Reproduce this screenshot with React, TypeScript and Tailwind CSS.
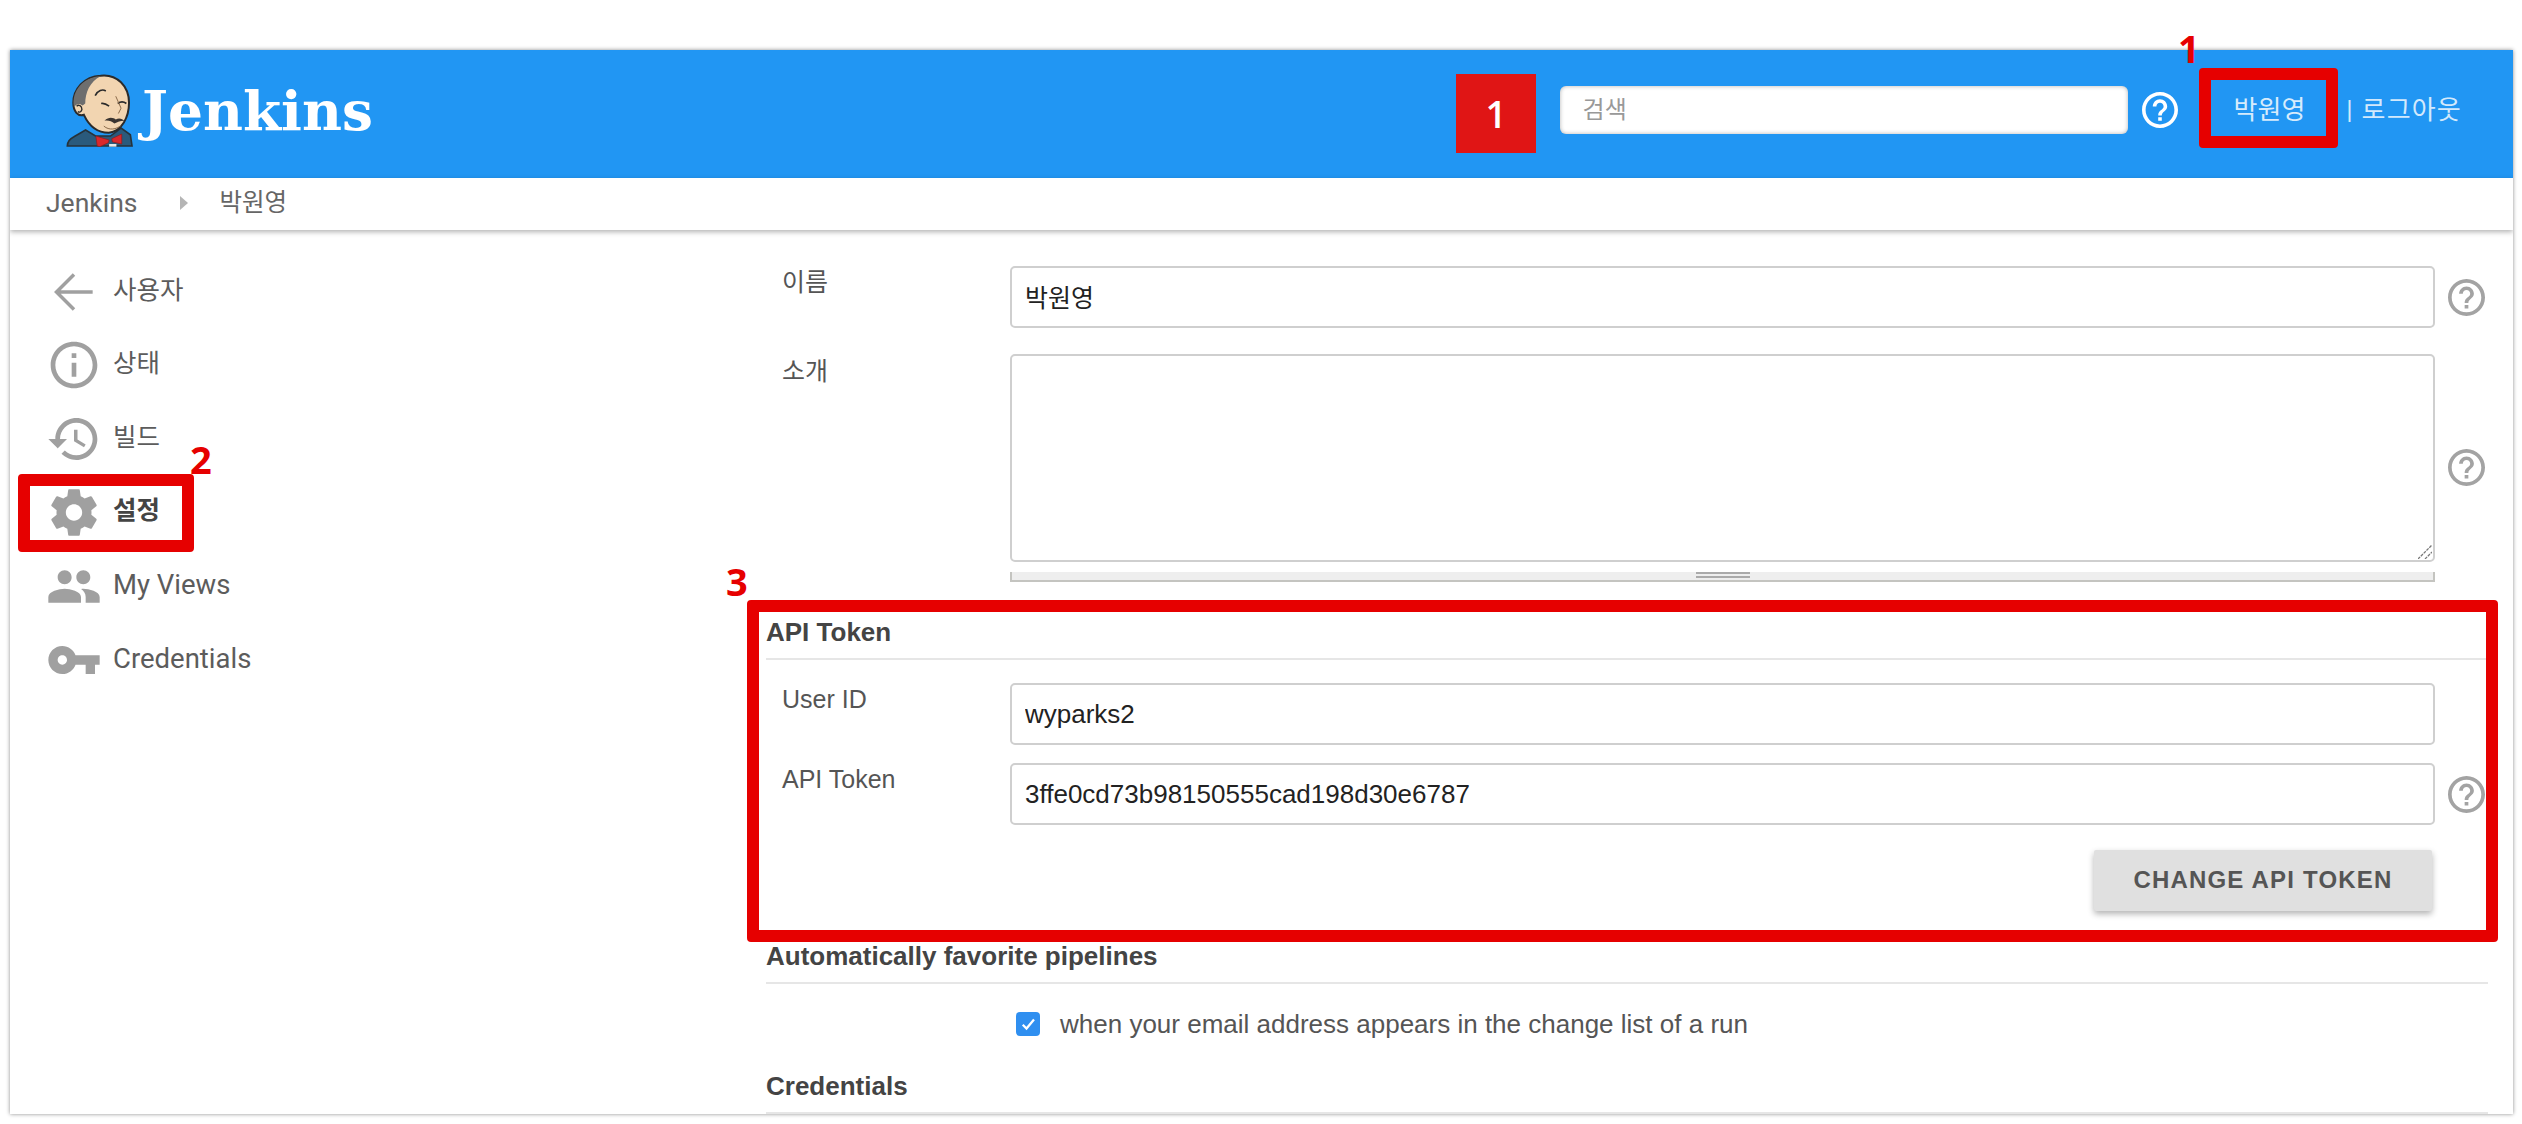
import React from 'react';

const HELP = 'M11 18h2v-2h-2v2zm1-16C6.48 2 2 6.48 2 12s4.48 10 10 10 10-4.48 10-10S17.52 2 12 2zm0 18c-4.41 0-8-3.59-8-8s3.59-8 8-8 8 3.59 8 8-3.59 8-8 8zm0-14c-2.21 0-4 1.79-4 4h2c0-1.1.9-2 2-2s2 .9 2 2c0 2-3 1.75-3 5h2c0-2.25 3-2.5 3-5 0-2.21-1.79-4-4-4z';

const HelpIcon = ({ className }: { className: string }) => (
  <svg viewBox="2 2 20 20" className={className} fill="currentColor">
    <path d={HELP} />
  </svg>
);

// Jenkins butler, drawn in a 3x grid
const Butler = () => (
  <svg viewBox="46 63 202 220" className="w-[67px] h-[73px] shrink-0">
    <path d="M50 280 Q50 262 70 252 L105 232 L135 250 L180 250 L212 226 L240 246 L245 280 Z" fill="#2a5a7c" stroke="#26323a" strokeWidth="5" />
    <path d="M150 68 C200 62 236 100 236 150 C236 192 215 236 175 240 C135 240 112 212 100 186 C82 192 68 176 68 150 C68 110 100 70 150 68 Z" fill="#f2d5b1" stroke="#2b2b2b" strokeWidth="6" />
    <path d="M70 162 C62 112 100 72 150 70 C118 86 104 120 104 152 L96 158 C88 150 78 152 70 162 Z" fill="#6e6e6e" />
    <path d="M78 160 C84 154 94 158 94 170 C92 178 86 180 82 176" fill="none" stroke="#2b2b2b" strokeWidth="4" />
    <path d="M134 128 C142 112 156 108 166 114" fill="none" stroke="#2b2b2b" strokeWidth="5" />
    <path d="M152 152 C160 150 168 154 176 160" fill="none" stroke="#2b2b2b" strokeWidth="5" />
    <path d="M202 152 C210 146 220 146 228 152" fill="none" stroke="#2b2b2b" strokeWidth="5" />
    <path d="M196 130 L212 166 L204 182" fill="none" stroke="#8a6a4a" strokeWidth="3" />
    <path d="M162 204 C176 190 190 196 196 200 C206 194 216 198 222 204 C208 204 198 210 192 212 C184 206 174 202 162 204 Z" fill="#3a3430" />
    <path d="M160 220 C176 234 198 230 212 218" fill="none" stroke="#8a6a4a" strokeWidth="3" />
    <path d="M136 250 L176 262 L174 270 L148 282 L140 280 Z" fill="#d9282c" stroke="#8c1a1a" strokeWidth="2" />
    <path d="M214 244 L184 258 L186 268 L214 274 Z" fill="#d9282c" stroke="#8c1a1a" strokeWidth="2" />
    <rect x="176" y="274" width="22" height="8" fill="#e8e8e8" />
  </svg>
);

const MenuIcon = ({ children, className }: { children: React.ReactNode; className: string }) => (
  <div className="w-[56px] flex justify-center shrink-0 mr-[11px] text-[#a0a0a0]">
    <svg viewBox="0 0 24 24" className={className} fill="currentColor">
      {children}
    </svg>
  </div>
);

const menu = [
  {
    label: '사용자',
    icon: (
      <MenuIcon className="w-[56px] h-[56px]">
        <path d="M20 12H5M12 4.5 4.5 12l7.5 7.5" fill="none" stroke="currentColor" strokeWidth="1.5" />
      </MenuIcon>
    ),
  },
  {
    label: '상태',
    icon: (
      <MenuIcon className="w-[58px] h-[58px]">
        <path d="M11 17h2v-6h-2v6zm1-15C6.48 2 2 6.48 2 12s4.48 10 10 10 10-4.48 10-10S17.52 2 12 2zm0 18c-4.41 0-8-3.59-8-8s3.59-8 8-8 8 3.59 8 8-3.59 8-8 8zM11 9h2V7h-2v2z" />
      </MenuIcon>
    ),
  },
  {
    label: '빌드',
    icon: (
      <MenuIcon className="w-[58px] h-[58px]">
        <path d="M13 3c-4.97 0-9 4.03-9 9H1l3.89 3.89.07.14L9 12H6c0-3.87 3.13-7 7-7s7 3.13 7 7-3.13 7-7 7c-1.93 0-3.68-.79-4.94-2.06l-1.42 1.42C8.27 19.99 10.51 21 13 21c4.97 0 9-4.03 9-9s-4.03-9-9-9zm-1 5v5l4.28 2.54.72-1.21-3.5-2.08V8H12z" />
      </MenuIcon>
    ),
  },
  {
    label: '설정',
    bold: true,
    icon: (
      <MenuIcon className="w-[61px] h-[61px]">
        <path d="M19.43 12.98c.04-.32.07-.64.07-.98s-.03-.66-.07-.98l2.11-1.65c.19-.15.24-.42.12-.64l-2-3.46c-.12-.22-.39-.3-.61-.22l-2.49 1c-.52-.4-1.08-.73-1.69-.98l-.38-2.65C14.46 2.18 14.25 2 14 2h-4c-.25 0-.46.18-.49.42l-.38 2.65c-.61.25-1.17.59-1.69.98l-2.49-1c-.23-.09-.49 0-.61.22l-2 3.46c-.13.22-.07.49.12.64l2.11 1.65c-.04.32-.07.65-.07.98s.03.66.07.98l-2.11 1.65c-.19.15-.24.42-.12.64l2 3.46c.12.22.39.3.61.22l2.49-1c.52.4 1.08.73 1.69.98l.38 2.65c.03.24.24.42.49.42h4c.25 0 .46-.18.49-.42l.38-2.65c.61-.25 1.17-.59 1.69-.98l2.49 1c.23.09.49 0 .61-.22l2-3.46c.12-.22.07-.49-.12-.64l-2.11-1.65zM12 15.5c-1.93 0-3.5-1.57-3.5-3.5s1.57-3.5 3.5-3.5 3.5 1.57 3.5 3.5-1.57 3.5-3.5 3.5z" />
      </MenuIcon>
    ),
  },
  {
    label: 'My Views',
    latin: true,
    icon: (
      <MenuIcon className="w-[61px] h-[61px]">
        <path d="M16 11c1.66 0 2.99-1.34 2.99-3S17.66 5 16 5c-1.66 0-3 1.34-3 3s1.34 3 3 3zm-8 0c1.66 0 2.99-1.34 2.99-3S9.66 5 8 5C6.34 5 5 6.34 5 8s1.34 3 3 3zm0 2c-2.33 0-7 1.17-7 3.5V19h14v-2.5c0-2.33-4.67-3.5-7-3.5zm8 0c-.29 0-.62.02-.97.05 1.16.84 1.97 1.97 1.97 3.45V19h6v-2.5c0-2.33-4.67-3.5-7-3.5z" />
      </MenuIcon>
    ),
  },
  {
    label: 'Credentials',
    latin: true,
    icon: (
      <MenuIcon className="w-[58px] h-[58px]">
        <path d="M12.65 10C11.83 7.67 9.61 6 7 6c-3.31 0-6 2.69-6 6s2.69 6 6 6c2.61 0 4.83-1.67 5.65-4H17v4h4v-4h2v-4H12.65zM7 14c-1.1 0-2-.9-2-2s.9-2 2-2 2 .9 2 2-.9 2-2 2z" />
      </MenuIcon>
    ),
  },
];

const SectionHeading = ({ children, className }: { children: string; className: string }) => (
  <div className={`h-[48px] flex items-end pb-[14px] border-b-2 border-[#e6e6e6] w-[1722px] ${className}`}>
    <span className="text-[26px] leading-[24px] font-bold text-[#444]">{children}</span>
  </div>
);

const Field = ({ label, value, help, className, inputClass }: { label: string; value: string; help?: boolean; className?: string; inputClass?: string }) => (
  <div className={`flex ${className ?? ''}`}>
    <div className="w-[244px] pl-[16px] pt-[1px] text-[25px] leading-[30px] text-[#555] shrink-0">{label}</div>
    <input
      readOnly
      defaultValue={value}
      className={`w-[1425px] h-[62px] px-[13px] border-2 border-[#cfcfcf] rounded-[5px] bg-white text-[#222] outline-none ${inputClass ?? 'text-[26px]'}`}
    />
    {help && <HelpIcon className="w-[37px] h-[37px] ml-[13px] mt-[13px] text-[#a3a3a3]" />}
  </div>
);

export default function App() {
  return (
    <div className="relative w-[2522px] h-[1124px] overflow-hidden bg-white pt-[50px] pl-[10px] font-['Liberation_Sans','Noto_Sans_CJK_KR',sans-serif]">
      <div className="w-[2503px] h-[1064px] bg-white shadow-[0_0_4px_rgba(0,0,0,0.45)] overflow-hidden flex flex-col">
        {/* Header */}
        <header className="h-[128px] bg-[#2196f3] flex items-center pl-[56px] pr-[51px] pb-[8px] shrink-0">
          <Butler />
          <span className="ml-[9px] mt-[1px] font-['DejaVu_Serif',serif] font-bold text-[55px] leading-none text-white">Jenkins</span>
          <div className="ml-auto flex items-center text-white font-[Roboto,'Noto_Sans_CJK_KR',sans-serif]">
            <div className="w-[568px] h-[48px] bg-white rounded-[6px] shadow-[inset_0_0_4px_rgba(0,0,0,0.3)] flex items-center px-[23px] text-[24px] text-[#999]">검색</div>
            <HelpIcon className="w-[36px] h-[36px] ml-[14px]" />
            <span className="ml-[56px] text-[26px] text-[#d6ebfc]">박원영</span>
            <span className="ml-[41px] text-[26px] tracking-[1.2px] text-[#d3e9fc]">| 로그아웃</span>
          </div>
        </header>

        {/* Breadcrumb */}
        <nav className="relative h-[52px] shrink-0 flex items-center pl-[36px] pb-[2px] bg-white shadow-[0_2px_5px_rgba(0,0,0,0.3)] text-[24.5px] text-[#666] font-[Roboto,'Noto_Sans_CJK_KR',sans-serif]">
          <span className="text-[26.5px]">Jenkins</span>
          <span className="ml-[42px] w-0 h-0 border-y-[7px] border-y-transparent border-l-[8px] border-l-[#b5b5b5]" />
          <span className="ml-[32px]">박원영</span>
        </nav>

        <div className="flex flex-1 min-h-0">
          {/* Side menu */}
          <aside className="w-[756px] shrink-0 pt-[25px] pl-[36px] font-[Roboto,'Noto_Sans_CJK_KR',sans-serif]">
            {menu.map((item) => (
              <div key={item.label} className="h-[73.6px] flex items-center">
                {item.icon}
                <span className={`${item.latin ? 'text-[27.5px]' : 'text-[25.5px]'} leading-none mb-[3px] ${item.bold ? 'font-semibold text-[#444]' : 'text-[#5c5c5c]'}`}>{item.label}</span>
              </div>
            ))}
          </aside>

          {/* Form */}
          <main className="flex-1 min-w-0 pt-[36px]">
            <Field label="이름" value="박원영" help inputClass="text-[25px] pb-[3px]" />
            <div className="flex mt-[26px]">
              <div className="w-[244px] pl-[16px] pt-[1px] text-[25px] leading-[32px] text-[#555] shrink-0">소개</div>
              <div className="relative">
                <textarea readOnly className="block w-[1425px] h-[208px] resize-none border-2 border-[#cfcfcf] rounded-[5px] bg-white outline-none" />
                {/* resize grip */}
                <svg viewBox="0 0 14 14" className="absolute right-[3px] bottom-[3px] w-[14px] h-[14px]" stroke="#777" strokeWidth="1.3" strokeDasharray="3 1" fill="none">
                  <path d="M0 14 14 0M7 14l7-7" />
                </svg>
              </div>
              <HelpIcon className="w-[37px] h-[37px] ml-[13px] mt-[95px] text-[#a3a3a3]" />
            </div>
            <div className="ml-[244px] mt-[10px] w-[1425px] h-[10px] bg-[#eeeeee] border-b-2 border-x-2 border-[#c4c4c0] flex justify-center">
              <div className="w-[54px] h-[6px] border-y-2 border-[#aaaaaa]" />
            </div>

            <SectionHeading className="mt-[30px]">API Token</SectionHeading>
            <Field className="mt-[23px]" label="User ID" value="wyparks2" />
            <Field className="mt-[18px]" label="API Token" value="3ffe0cd73b98150555cad198d30e6787" help />
            <div className="w-[1666px] flex justify-end mt-[25px]">
              <button className="w-[338px] h-[61px] pb-[1px] bg-[#e0e0e0] rounded-[2px] shadow-[0_3px_6px_rgba(0,0,0,0.3)] text-[24px] font-bold tracking-[1.2px] text-[#555]">CHANGE API TOKEN</button>
            </div>

            <SectionHeading className="mt-[25px]">Automatically favorite pipelines</SectionHeading>
            <div className="flex items-center ml-[250px] mt-[28px] h-[24px]">
              <span className="w-[24px] h-[24px] rounded-[4px] bg-[#2f8ff0] flex items-center justify-center shrink-0">
                <svg viewBox="0 0 24 24" className="w-[18px] h-[18px]" fill="none" stroke="white" strokeWidth="3">
                  <path d="M5 13l5 5L20 6" />
                </svg>
              </span>
              <span className="ml-[20px] text-[26px] text-[#555]">when your email address appears in the change list of a run</span>
            </div>
            <SectionHeading className="mt-[30px]">Credentials</SectionHeading>
          </main>
        </div>
      </div>

      {/* Red annotations laid over the screenshot */}
      <div className="absolute left-[1456px] top-[74px] w-[80px] h-[79px] bg-[#e01515] flex items-center justify-center text-white text-[37px] font-semibold font-['Open_Sans',sans-serif]">1</div>
      <div className="absolute left-[2199px] top-[68px] w-[139px] h-[80px] border-[12px] border-[#e60000] rounded-[4px]" />
      <div className="absolute left-[18px] top-[474px] w-[176px] h-[78px] border-[12px] border-[#e60000] rounded-[4px]" />
      <div className="absolute left-[747px] top-[600px] w-[1751px] h-[342px] border-[12px] border-[#e60000] rounded-[4px]" />
      <span className="absolute left-[2178px] top-[22px] text-[38px] leading-[52px] font-bold text-[#e60000] font-['Open_Sans',sans-serif]">1</span>
      <span className="absolute left-[190px] top-[433px] text-[38px] leading-[52px] font-bold text-[#e60000] font-['Open_Sans',sans-serif]">2</span>
      <span className="absolute left-[726px] top-[555px] text-[38px] leading-[52px] font-bold text-[#e60000] font-['Open_Sans',sans-serif]">3</span>
    </div>
  );
}
